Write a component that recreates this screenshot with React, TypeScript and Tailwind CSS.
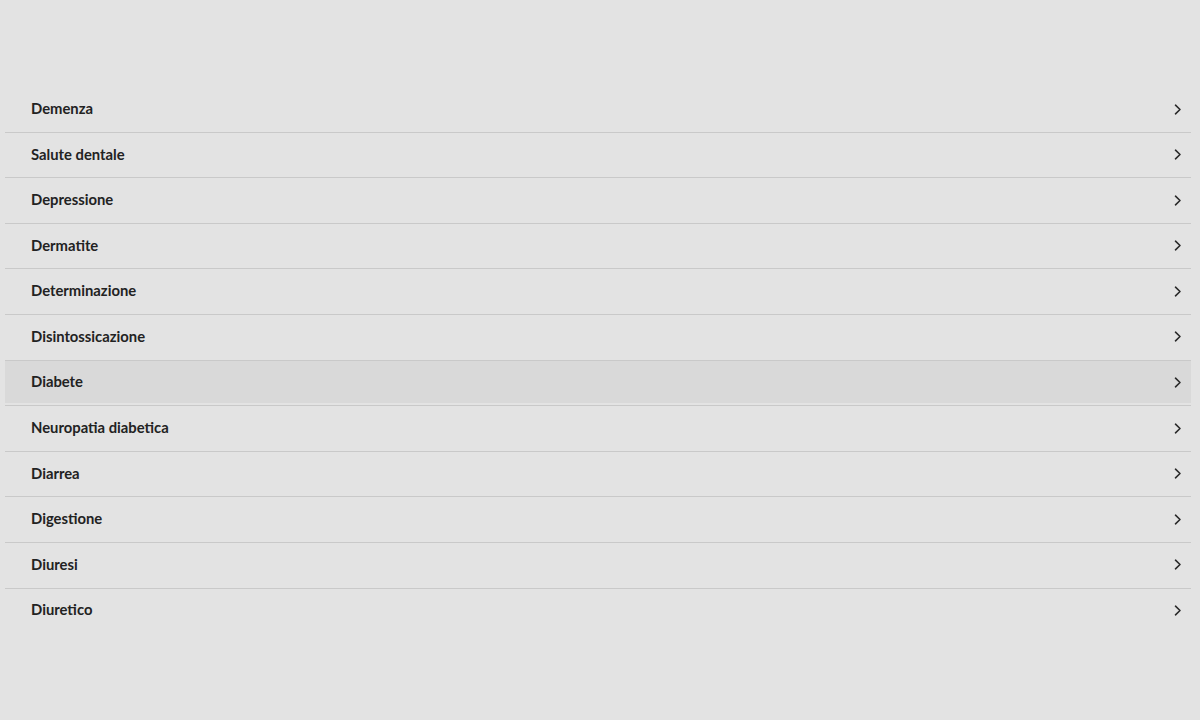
const items = [
  'Demenza',
  'Salute dentale',
  'Depressione',
  'Dermatite',
  'Determinazione',
  'Disintossicazione',
  'Diabete',
  'Neuropatia diabetica',
  'Diarrea',
  'Digestione',
  'Diuresi',
  'Diuretico',
];

const Chevron = () => (
  <svg width="8" height="11" viewBox="0 0 8 11" fill="none" stroke="#2a2a2a" strokeWidth={1.6} strokeLinecap="round" strokeLinejoin="round" className="mt-[2px]">
    <path d="M1.5 1.2l4.5 4.3-4.5 4.3" />
  </svg>
);

const App = () => {
  return (
    <div className="min-h-[720px] w-full bg-[#e3e3e3] pt-[87px]" style={{ fontFamily: 'Lato, "Noto Sans", sans-serif' }}>
      <ul className="ml-[5px] w-[1186px]">
        {items.map((item, i) => (
          <li
            key={item}
            className={`${i < items.length - 1 ? 'border-b border-[#c9c9c9]' : ''} h-[45.6px]`}
          >
            <a
              href="#"
              className={`flex h-[42px] items-center justify-between pl-[26px] pr-[9px] ${
                item === 'Diabete' ? 'bg-[#d9d9d9]' : ''
              }`}
            >
              <span className="text-[14.8px] font-bold text-[#222]">{item}</span>
              <Chevron />
            </a>
          </li>
        ))}
      </ul>
    </div>
  );
};

export default App;
